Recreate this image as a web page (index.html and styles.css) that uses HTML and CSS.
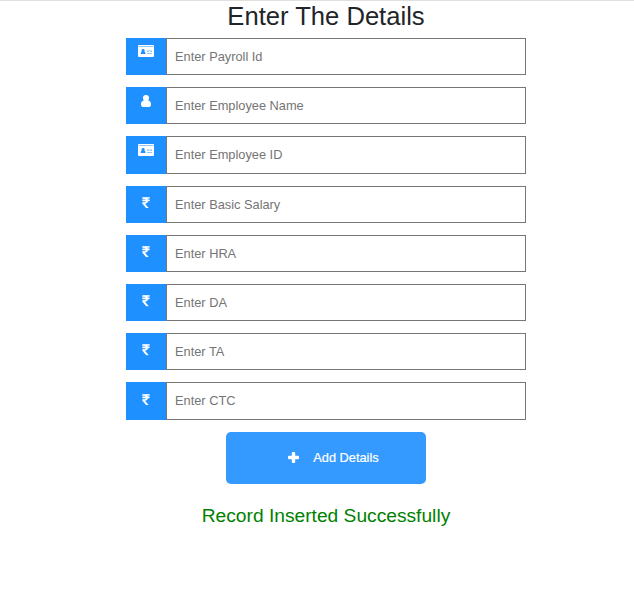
FILE: index.html
```html
<!DOCTYPE html>
<html lang="en">
<head>
<meta charset="utf-8">
<title>Payroll Details</title>
<link rel="stylesheet" href="styles.css">
</head>
<body>
<svg class="sprite" aria-hidden="true">
  <symbol id="card" viewBox="0 0 16 12"><path fill-rule="evenodd" d="M1 0h14a1 1 0 0 1 1 1v10a1 1 0 0 1-1 1H1a1 1 0 0 1-1-1V1a1 1 0 0 1 1-1zM.8 1.500v.5h14.400v-.5zM2.700 9h4.800c0-1.500-.4-2.200-1.200-2.400.8-1.200.3-2.600-1.200-2.600S3.100 5.400 3.900 6.600C3.100 6.800 2.700 7.600 2.700 9zM9 4.900v.4h5v-.4zM9 6.600v.4h2v-.4zM12 6.600v.4h2v-.4zM9 8.200v.6h5v-.6z"/></symbol>
  <symbol id="user" viewBox="0 0 10 12"><path d="M5 0a3.100 3.100 0 0 1 3.100 3.100c0 1-.4 1.800-.9 2.400C9.300 5.700 10 7.500 10 9.600c0 1.300-.8 2.400-1.800 2.400H1.800C.8 12 0 10.900 0 9.600c0-2.100.7-3.900 2.800-4.100C2.300 4.900 1.900 4.100 1.900 3.100A3.100 3.100 0 0 1 5 0z"/></symbol>
  <symbol id="rupee" viewBox="-30 98 958 1468"><path d="M898 470v110q0 14-9 23t-23 9h-168q-23 144-129 234t-276 110q167 178 459 536 14 16 4 34-8 18-29 18h-195q-16 0-25-12-306-367-498-571-9-9-9-22v-127q0-13 9.500-22.500t22.500-9.500h112q132 0 212.500-43t102.500-125h-427q-14 0-23-9t-9-23v-102q0-14 9-23t23-9h413q-57-113-268-113h-145q-13 0-22.500-9.500t-9.500-22.500v-133q0-14 9-23t23-9h832q14 0 23 9t9 23v102q0 14-9 23t-23 9h-233q47 61 64 144h171q14 0 23 9t9 23z"/></symbol>
  <symbol id="plus" viewBox="0 0 11 11"><path d="M4.700 0h1.600q.9 0 .9.900v2.900h2.900q.9 0 .9.900v1.600q0 .9-.9.900H7.200v2.900q0 .9-.9.900H4.700q-.9 0-.9-.9V7.200H.9Q0 7.200 0 6.300V4.700q0-.9.900-.9h2.900V.9q0-.9.900-.9z"/></symbol>
</svg>
<form class="form">
  <h2 class="title">Enter The Details</h2>
  <div class="row"><span class="icon"><svg class="card"><use href="#card"/></svg></span><input class="field" placeholder="Enter Payroll Id"></div>
  <div class="row"><span class="icon"><svg class="user"><use href="#user"/></svg></span><input class="field" placeholder="Enter Employee Name"></div>
  <div class="row"><span class="icon"><svg class="card"><use href="#card"/></svg></span><input class="field" placeholder="Enter Employee ID"></div>
  <div class="row"><span class="icon"><svg class="rupee"><use href="#rupee"/></svg></span><input class="field" placeholder="Enter Basic Salary"></div>
  <div class="row"><span class="icon"><svg class="rupee"><use href="#rupee"/></svg></span><input class="field" placeholder="Enter HRA"></div>
  <div class="row"><span class="icon"><svg class="rupee"><use href="#rupee"/></svg></span><input class="field" placeholder="Enter DA"></div>
  <div class="row"><span class="icon"><svg class="rupee"><use href="#rupee"/></svg></span><input class="field" placeholder="Enter TA"></div>
  <div class="row"><span class="icon"><svg class="rupee"><use href="#rupee"/></svg></span><input class="field" placeholder="Enter CTC"></div>
  <button class="submit" type="button"><svg class="plus"><use href="#plus"/></svg>Add Details</button>
  <p class="message">Record Inserted Successfully</p>
</form>
</body>
</html>
```
FILE: styles.css
```css
* { box-sizing: border-box; }
body {
  margin: 0;
  border-top: 1px solid #e0e0e0;
  background: #fff;
  color: #212529;
  font-family: "Liberation Sans", Arial, sans-serif;
}
.sprite { display: none; }
.form {
  display: flex;
  flex-direction: column;
  width: 400px;
  margin-left: 126px;
}
.title {
  margin: 0 0 6px;
  font-size: 25.6px;
  font-weight: 400;
  line-height: 31px;
  text-align: center;
}
.row {
  display: flex;
  height: 37.2px;
  margin-bottom: 12px;
}
.icon {
  display: flex;
  justify-content: center;
  width: 40px;
  background: #1e90ff;
  color: #fff;
}
.icon svg, .plus { fill: currentColor; }
.card { width: 16px; height: 12px; margin-top: 7.400px; }
.user { width: 10px; height: 12px; margin-top: 7.400px; }
.rupee {
  width: 8px;
  height: 11.500px;
  margin-top: 11.200px;
  stroke: currentColor;
  stroke-width: 50;
}
.field {
  flex: 1;
  min-width: 0;
  border: 1px solid #767676;
  border-radius: 0;
  padding: 0 8px;
  background: #fff;
  font: 12.800px "Liberation Sans", Arial, sans-serif;
}
.field::placeholder { color: #757575; }
.submit {
  display: flex;
  align-items: center;
  justify-content: center;
  gap: 14px;
  width: 200px;
  height: 52px;
  margin: 0 auto;
  padding: 0 0 0 15px;
  border: 0;
  border-radius: 5px;
  background: #359aff;
  color: #fff;
  font: 12.800px "Liberation Sans", Arial, sans-serif;
  -webkit-text-stroke: 0.2px #fff;
}
.plus { width: 11px; height: 11px; }
.message {
  margin: 20px 0 0;
  color: #008000;
  font-size: 19.200px;
  line-height: 23px;
  text-align: center;
}
```
